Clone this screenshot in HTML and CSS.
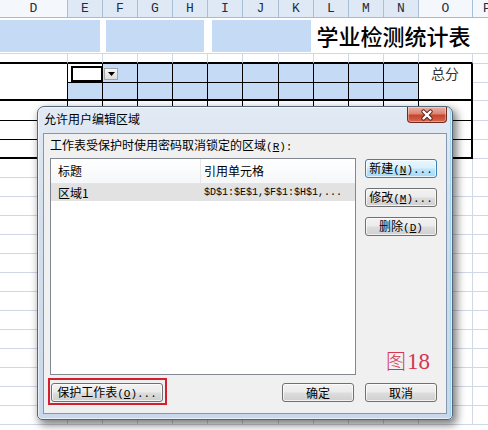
FILE: index.html
```html
<!DOCTYPE html>
<html lang="zh-CN">
<head>
<meta charset="utf-8">
<title>允许用户编辑区域</title>
<link rel="stylesheet" href="styles.css">
</head>
<body>
<div class="sheet">
  <div class="row hdr">
    <div class="h">D</div><div class="h sel">E</div><div class="h sel">F</div><div class="h sel">G</div><div class="h sel">H</div><div class="h sel">I</div><div class="h sel">J</div><div class="h sel">K</div><div class="h sel">L</div><div class="h sel">M</div><div class="h sel">N</div><div class="h">O</div><div class="h p">P</div>
  </div>
  <div class="row r1">
    <div class="s2"><div class="blk b1"></div></div>
    <div class="s3"><div class="blk b2"></div></div>
    <div class="s3"><div class="blk b3"></div></div>
    <div class="s4 title">学业检测统计表</div>
    <div></div>
  </div>
  <div class="row r2">
    <div></div><div></div><div></div><div></div><div></div><div></div><div></div><div></div><div></div><div></div><div></div><div></div><div class="p"></div>
  </div>
  <div class="row t r3">
    <div class="d"></div>
    <div class="e"><div class="active"></div></div>
    <div class="bl f"><span class="dd"><svg width="7" height="4" viewBox="0 0 7 4"><path d="M0 0H7L3.5 4Z" fill="#000"/></svg></span></div>
    <div class="bl"></div><div class="bl"></div><div class="bl"></div><div class="bl"></div><div class="bl"></div><div class="bl"></div><div class="bl"></div><div class="bl"></div>
    <div class="o">总分</div>
    <div class="p"></div>
  </div>
  <div class="row t r4">
    <div class="d"></div><div class="bl"></div><div class="bl"></div><div class="bl"></div><div class="bl"></div><div class="bl"></div><div class="bl"></div><div class="bl"></div><div class="bl"></div><div class="bl"></div><div class="bl"></div><div class="o"></div><div class="p"></div>
  </div>
  <div class="row t r5">
    <div></div><div></div><div></div><div></div><div></div><div></div><div></div><div></div><div></div><div></div><div></div><div class="o"></div><div class="p"></div>
  </div>
  <div class="row t r6">
    <div></div><div></div><div></div><div></div><div></div><div></div><div></div><div></div><div></div><div></div><div></div><div class="o"></div><div class="p"></div>
  </div>
  <div class="row t r7">
    <div></div><div></div><div></div><div></div><div></div><div></div><div></div><div></div><div></div><div></div><div></div><div class="o"></div><div class="p"></div>
  </div>
  <div class="rest">
    <div class="row g"><div></div><div></div><div></div><div></div><div></div><div></div><div></div><div></div><div></div><div></div><div></div><div></div><div></div></div>
    <div class="row g"><div></div><div></div><div></div><div></div><div></div><div></div><div></div><div></div><div></div><div></div><div></div><div></div><div></div></div>
    <div class="row g"><div></div><div></div><div></div><div></div><div></div><div></div><div></div><div></div><div></div><div></div><div></div><div></div><div></div></div>
    <div class="row g"><div></div><div></div><div></div><div></div><div></div><div></div><div></div><div></div><div></div><div></div><div></div><div></div><div></div></div>
    <div class="row g"><div></div><div></div><div></div><div></div><div></div><div></div><div></div><div></div><div></div><div></div><div></div><div></div><div></div></div>
    <div class="row g"><div></div><div></div><div></div><div></div><div></div><div></div><div></div><div></div><div></div><div></div><div></div><div></div><div></div></div>
    <div class="row g"><div></div><div></div><div></div><div></div><div></div><div></div><div></div><div></div><div></div><div></div><div></div><div></div><div></div></div>
    <div class="row g"><div></div><div></div><div></div><div></div><div></div><div></div><div></div><div></div><div></div><div></div><div></div><div></div><div></div></div>
    <div class="row g"><div></div><div></div><div></div><div></div><div></div><div></div><div></div><div></div><div></div><div></div><div></div><div></div><div></div></div>
    <div class="row g"><div></div><div></div><div></div><div></div><div></div><div></div><div></div><div></div><div></div><div></div><div></div><div></div><div></div></div>
    <div class="row g"><div></div><div></div><div></div><div></div><div></div><div></div><div></div><div></div><div></div><div></div><div></div><div></div><div></div></div>
    <div class="row g"><div></div><div></div><div></div><div></div><div></div><div></div><div></div><div></div><div></div><div></div><div></div><div></div><div></div></div>
    <div class="row g"><div></div><div></div><div></div><div></div><div></div><div></div><div></div><div></div><div></div><div></div><div></div><div></div><div></div></div>
    <div class="row g"><div></div><div></div><div></div><div></div><div></div><div></div><div></div><div></div><div></div><div></div><div></div><div></div><div></div></div>
  </div>
</div>

<div class="dialog">
  <div class="titlebar">
    <span class="ttl">允许用户编辑区域</span>
    <div class="close"><svg width="14" height="12" viewBox="0 0 14 12"><path d="M3.5 2.5L10.5 9.5M10.5 2.5L3.5 9.5" stroke="#5b2218" stroke-width="4.2" stroke-linecap="round"/><path d="M3.5 2.5L10.5 9.5M10.5 2.5L3.5 9.5" stroke="#fff" stroke-width="2.4" stroke-linecap="round"/></svg></div>
  </div>
  <div class="client">
    <div class="lbl">工作表受保护时使用密码取消锁定的区域<span class="m">(<u>R</u>):</span></div>
    <div class="main">
      <div class="list">
        <div class="lh"><div class="c1">标题</div><div class="c2">引用单元格</div></div>
        <div class="li"><div class="c1">区域1</div><div class="c2 mono">$D$1:$E$1,$F$1:$H$1,...</div></div>
      </div>
      <div class="side">
        <button class="btn focus">新建<span class="m">(<u>N</u>)...</span></button>
        <button class="btn">修改<span class="m">(<u>M</u>)...</span></button>
        <button class="btn">删除<span class="m">(<u>D</u>)</span></button>
      </div>
    </div>
    <div class="foot">
      <span class="mark"><button class="btn wide">保护工作表<span class="m">(<u>O</u>)...</span></button></span>
      <button class="btn ok">确定</button>
      <button class="btn">取消</button>
    </div>
    <div class="fig">图<span class="num">18</span></div>
  </div>
</div>
</body>
</html>
```

FILE: styles.css
```css
* { box-sizing: border-box; margin: 0; padding: 0; }
html, body { width: 488px; height: 430px; overflow: hidden; background: #fff; }
body {
  font-family: "Noto Sans CJK SC", "Liberation Sans", sans-serif;
  font-size: 12px;
  color: #000;
  position: relative;
}

/* ---------- spreadsheet ---------- */
.row {
  display: grid;
  grid-template-columns: 68px repeat(5, 35px) 36px repeat(4, 35px) 54px 1fr;
}
.hdr {
  height: 18px;
  background: #f4f7fb;
  border-bottom: 1px solid #9fbbe0;
}
.h {
  border-right: 1px solid #a8bfd8;
  font-family: "Liberation Mono", monospace;
  font-size: 13px;
  line-height: 17px;
  text-align: center;
  color: #1e2d40;
}
.h.sel { background: #dfe9f6; }
.h.p { border-right: 0; text-align: left; padding-left: 10px; }

.r1 { height: 36px; }
.r1 > div { border-bottom: 1px solid #d0d7e5; }
.s2 { grid-column: span 2; }
.s3 { grid-column: span 3; }
.s4 { grid-column: span 4; }
.blk { background: #c5dbf5; height: 32px; margin-top: 2px; }
.b1 { margin-right: 3px; }
.b2 { margin-left: 3px; margin-right: 4px; }
.b3 { margin-left: 4px; margin-right: 3px; }
.title {
  font-size: 22px;
  font-weight: 500;
  line-height: 34px;
  text-align: center;
}

.r2 { height: 10px; }
.r2 > div { border-right: 1px solid #d0d7e5; border-bottom: 2px solid #000; }
.r2 > .p { border-bottom: 1px solid #d0d7e5; border-right: 0; }

.t > div { border-right: 1px solid #000; border-bottom: 1px solid #000; }
.t > .o { border-right: 2px solid #000; }
.t > .p { border-right: 0; border-bottom: 1px solid #d0d7e5; }
.r3 { height: 19px; }
.r3 > .d, .r3 > .o { border-bottom: 0; }
.r3 > .e { padding: 2px 0 0 3px; }
.active { height: 100%; border: 2px solid #000; border-right-width: 1px; background: #fff; }
.bl { background: #c5dbf5; }
.f { display: flex; align-items: flex-start; padding: 4px 0 0 1px; }
.dd {
  width: 14px; height: 12px;
  display: flex; align-items: center; justify-content: center;
  background: linear-gradient(#f7f7f7, #dcdcdc);
  border: 1px solid #a4a4a4;
}
.o { font-size: 14px; color: #333; text-align: center; line-height: 18px; }
.r4 { height: 18px; }
.r4 > div { border-bottom-width: 2px; }
.r4 > .p { border-bottom-width: 1px; }
.r5 { height: 20px; }
.r6 { height: 19px; }
.r7 { height: 19px; }
.r7 > div { border-bottom-width: 2px; }
.r7 > .p { border-bottom-width: 1px; }

.g { height: 19px; }
.g > div { border-right: 1px solid #d0d7e5; border-bottom: 1px solid #d0d7e5; }
.g > div:last-child { border-right: 0; }

/* ---------- dialog ---------- */
.dialog {
  position: absolute;
  left: 37px;
  top: 106px;
  width: 416px;
  height: 314px;
  border: 1px solid #56667a;
  border-radius: 7px 7px 5px 5px;
  background: linear-gradient(180deg, #e2eaf4 0%, #d3dfee 35%, #c9d8ec 100%);
  box-shadow: 3px 4px 9px 1px rgba(0, 0, 0, 0.5), inset 0 0 0 1px rgba(255, 255, 255, 0.6), inset -2px 0 0 #9ed4f0;
  display: flex;
  flex-direction: column;
  padding: 0 5px 5px;
}
.titlebar {
  height: 26px;
  position: relative;
  display: flex;
  align-items: center;
  padding: 0 0 3px 1px;
}
.ttl { font-size: 12px; color: #000; line-height: 16px; }
.close {
  position: absolute;
  top: 0;
  right: 0;
  width: 40px;
  height: 16px;
  border: 1px solid #6e2c22;
  border-top: 0;
  border-radius: 0 0 4px 4px;
  background: linear-gradient(180deg, #eab1a5 0%, #dc8672 45%, #c6452d 55%, #d8684f 100%);
  box-shadow: inset 0 0 0 1px rgba(255, 255, 255, 0.35);
  display: flex;
  align-items: center;
  justify-content: center;
}
.client {
  flex: 1;
  position: relative;
  border: 1px solid #8397b1;
  background: #f0f0f0;
  padding: 3px 9px 0 6px;
  display: flex;
  flex-direction: column;
}
.lbl { line-height: 16px; height: 16px; margin-bottom: 5px; white-space: nowrap; }
.m { font-family: "Liberation Mono", monospace; font-size: 11px; }
.main { display: flex; gap: 9px; height: 217px; }
.list {
  width: 306px;
  border: 1px solid #828790;
  background: #fff;
}
.lh {
  display: flex;
  height: 25px;
  line-height: 23px;
  border-bottom: 1px solid #e3e4e6;
  background: linear-gradient(#ffffff, #f6f7f9);
}
.lh .c1 { border-right: 1px solid #e6e7e9; }
.c1 { width: 150px; padding-left: 7px; }
.c2 { padding-left: 3px; }
.li {
  display: flex;
  height: 17px;
  line-height: 17px;
  background: #e2e2e2;
}
.mono { font-family: "Liberation Mono", monospace; font-size: 10px; }
.side {
  width: 72px;
  display: flex;
  flex-direction: column;
  gap: 10px;
  padding-top: 1px;
}
.btn {
  display: block;
  height: 19px;
  width: 72px;
  border: 1px solid #707070;
  border-radius: 3px;
  background: linear-gradient(180deg, #f2f2f2 0%, #ebebeb 48%, #dddddd 52%, #cfcfcf 100%);
  box-shadow: inset 0 0 0 1px rgba(255, 255, 255, 0.7);
  font-family: "Noto Sans CJK SC", "Liberation Sans", sans-serif;
  font-size: 12px;
  line-height: 16px;
  color: #000;
  text-align: center;
  white-space: nowrap;
}
.btn.focus {
  border-color: #3c7fb1;
  background: linear-gradient(180deg, #eaf6fd 0%, #d9f0fc 48%, #bee6fd 52%, #a7d9f5 100%);
}
.foot {
  display: flex;
  align-items: flex-start;
  margin-top: 8px;
  padding-left: 1px;
}
.btn.wide { width: 112px; }
.mark {
  display: block;
  border: 2px solid #d4202e;
  padding: 3px 2px 1px 1px;
  margin: -5px 0 -3px -3px;
}
.ok { margin-left: auto; margin-right: 11px; }
.fig {
  position: absolute;
  left: 342px;
  top: 216px;
  font-size: 20px;
  line-height: 22px;
  color: #d5364f;
  font-weight: 300;
}
.num { font-family: "Liberation Serif", serif; font-size: 23px; margin-left: 1px; }
```
